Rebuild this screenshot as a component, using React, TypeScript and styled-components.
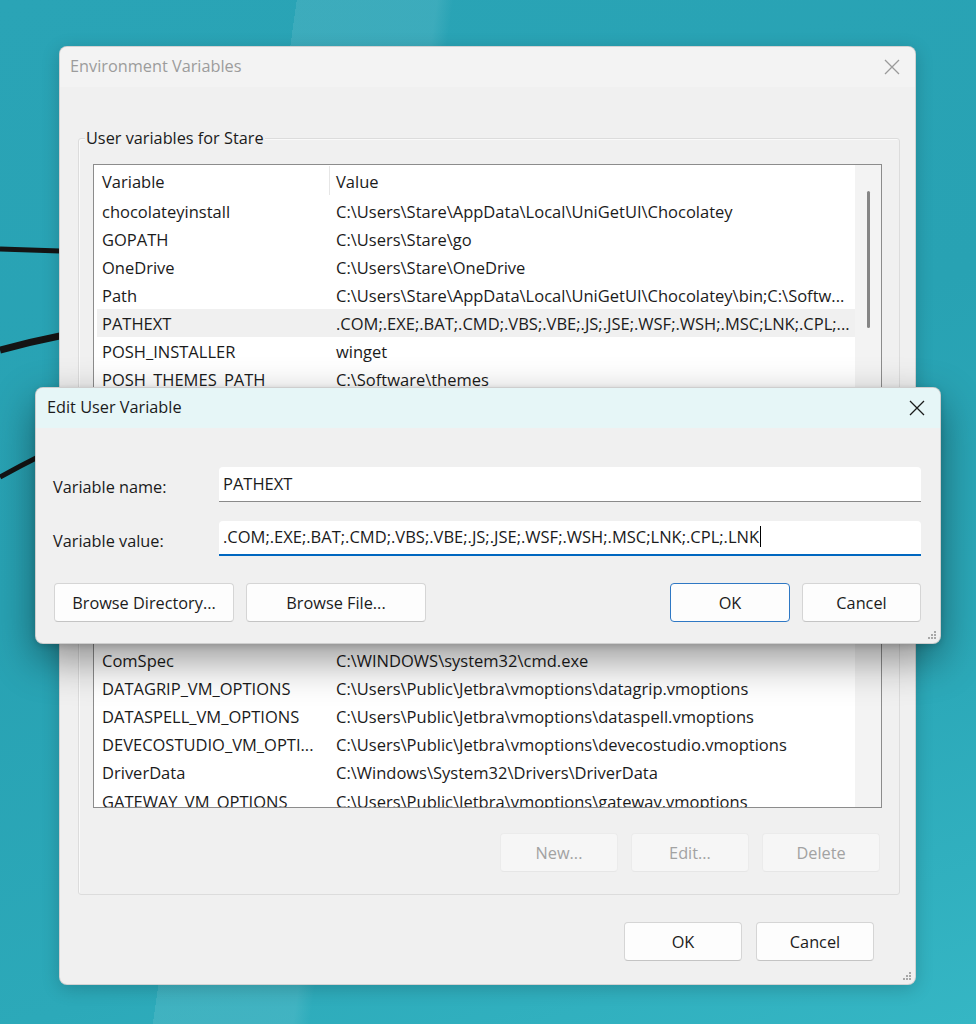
import styled, { createGlobalStyle } from 'styled-components'

const GlobalStyle = createGlobalStyle`
  html, body {
    margin: 0;
    padding: 0;
  }
  body {
    font-family: 'Open Sans', 'Noto Sans', sans-serif;
    color: #1b1b1b;
  }
`

const FONT = '16.3px'
const LIST_FONT = '16.5px'

type Row = { name: string; value: string; selected?: boolean }

const rows: Row[] = [
  { name: 'chocolateyinstall', value: 'C:\\Users\\Stare\\AppData\\Local\\UniGetUI\\Chocolatey' },
  { name: 'GOPATH', value: 'C:\\Users\\Stare\\go' },
  { name: 'OneDrive', value: 'C:\\Users\\Stare\\OneDrive' },
  { name: 'Path', value: 'C:\\Users\\Stare\\AppData\\Local\\UniGetUI\\Chocolatey\\bin;C:\\Softw...' },
  { name: 'PATHEXT', value: '.COM;.EXE;.BAT;.CMD;.VBS;.VBE;.JS;.JSE;.WSF;.WSH;.MSC;LNK;.CPL;...', selected: true },
  { name: 'POSH_INSTALLER', value: 'winget' },
  { name: 'POSH_THEMES_PATH', value: 'C:\\Software\\themes' },
  { name: 'TEMP', value: 'C:\\Users\\Stare\\AppData\\Local\\Temp' },
  { name: 'TMP', value: 'C:\\Users\\Stare\\AppData\\Local\\Temp' },
  { name: 'ALLUSERSPROFILE', value: 'C:\\ProgramData' },
  { name: 'APPCODE_VM_OPTIONS', value: 'C:\\Users\\Public\\Jetbra\\vmoptions\\appcode.vmoptions' },
  { name: 'CLION_VM_OPTIONS', value: 'C:\\Users\\Public\\Jetbra\\vmoptions\\clion.vmoptions' },
  { name: 'CommonProgramFiles', value: 'C:\\Program Files\\Common Files' },
  { name: 'CommonProgramFiles(x86)', value: 'C:\\Program Files (x86)\\Common Files' },
  { name: 'CommonProgramW6432', value: 'C:\\Program Files\\Common Files' },
  { name: 'COMPUTERNAME', value: 'STARE-PC' },
  { name: 'ComSpec', value: 'C:\\WINDOWS\\system32\\cmd.exe' },
  { name: 'DATAGRIP_VM_OPTIONS', value: 'C:\\Users\\Public\\Jetbra\\vmoptions\\datagrip.vmoptions' },
  { name: 'DATASPELL_VM_OPTIONS', value: 'C:\\Users\\Public\\Jetbra\\vmoptions\\dataspell.vmoptions' },
  { name: 'DEVECOSTUDIO_VM_OPTI...', value: 'C:\\Users\\Public\\Jetbra\\vmoptions\\devecostudio.vmoptions' },
  { name: 'DriverData', value: 'C:\\Windows\\System32\\Drivers\\DriverData' },
  { name: 'GATEWAY_VM_OPTIONS', value: 'C:\\Users\\Public\\Jetbra\\vmoptions\\gateway.vmoptions' },
]

const CloseIcon = ({ color }: { color: string }) => (
  <svg width="16" height="16" viewBox="0 0 16 16">
    <path d="M1 1 L15 15 M15 1 L1 15" stroke={color} strokeWidth="1.3" fill="none" />
  </svg>
)

const Grip = () => (
  <svg width="10" height="10" viewBox="0 0 10 10">
    {[
      [8, 2],
      [5, 5],
      [8, 5],
      [2, 8],
      [5, 8],
      [8, 8],
    ].map(([x, y], i) => (
      <rect key={i} x={x - 1} y={y - 1} width="2" height="2" fill="#a8a8a8" />
    ))}
  </svg>
)

const App = () => {
  return (
    <>
      <GlobalStyle />
      <Desktop>
        <Cables width="60" height="520" viewBox="0 0 60 520">
          <path d="M0 249 L60 251" stroke="#141414" strokeWidth="5" fill="none" />
          <path d="M0 350 Q30 342 60 336" stroke="#141414" strokeWidth="7" fill="none" />
          <path d="M0 477 Q20 466 40 456" stroke="#141414" strokeWidth="5" fill="none" />
        </Cables>

        <MainWindow>
          <TitleBar>
            <WindowTitle $inactive>Environment Variables</WindowTitle>
            <CloseButton>
              <CloseIcon color="#9a9a9a" />
            </CloseButton>
          </TitleBar>
          <MainBody>
            <GroupBox>
              <Legend>User variables for Stare</Legend>
              <ListView>
                <ListRows>
                  <HeaderRow>
                    <NameCell>Variable</NameCell>
                    <HeaderDivider />
                    <ValueCell>Value</ValueCell>
                  </HeaderRow>
                  {rows.map((r) => (
                    <ListRow key={r.name} $selected={r.selected}>
                      <NameCell>{r.name}</NameCell>
                      <ValueCell>{r.value}</ValueCell>
                    </ListRow>
                  ))}
                </ListRows>
                <ScrollTrack>
                  <ScrollThumb />
                </ScrollTrack>
              </ListView>
              <ButtonRow>
                <Button $disabled>New...</Button>
                <Button $disabled>Edit...</Button>
                <Button $disabled>Delete</Button>
              </ButtonRow>
            </GroupBox>
            <FooterRow>
              <Button>OK</Button>
              <Button>Cancel</Button>
            </FooterRow>
          </MainBody>
          <GripSpot>
            <Grip />
          </GripSpot>
        </MainWindow>

        <EditDialog>
          <DialogTitleBar>
            <WindowTitle>Edit User Variable</WindowTitle>
            <CloseButton>
              <CloseIcon color="#1b1b1b" />
            </CloseButton>
          </DialogTitleBar>
          <DialogBody>
            <FieldGrid>
              <FieldLabel>Variable name:</FieldLabel>
              <TextField>PATHEXT</TextField>
              <FieldLabel>Variable value:</FieldLabel>
              <TextField $focused>
                .COM;.EXE;.BAT;.CMD;.VBS;.VBE;.JS;.JSE;.WSF;.WSH;.MSC;LNK;.CPL;.LNK
                <Caret />
              </TextField>
            </FieldGrid>
            <DialogButtons>
              <Button $width={180}>Browse Directory...</Button>
              <Button $width={180}>Browse File...</Button>
              <Spacer />
              <Button $width={120} $default>
                OK
              </Button>
              <Button $width={119}>Cancel</Button>
            </DialogButtons>
          </DialogBody>
          <GripSpot>
            <Grip />
          </GripSpot>
        </EditDialog>
      </Desktop>
    </>
  )
}

export default App

const Desktop = styled.div`
  position: relative;
  width: 976px;
  height: 1024px;
  overflow: hidden;
  background:
    linear-gradient(98deg, transparent 26.5%, rgba(255, 255, 255, 0.09) 26.5%, rgba(255, 255, 255, 0.09) 39%, transparent 40.5%),
    linear-gradient(160deg, #2aa4b6 0%, #28a2b3 45%, #2ca9b9 75%, #35b6c4 100%);
`

const Cables = styled.svg`
  position: absolute;
  left: 0;
  top: 0;
`

const MainWindow = styled.div`
  position: absolute;
  left: 59px;
  top: 46px;
  width: 857px;
  height: 939px;
  box-sizing: border-box;
  background: #f0f0f0;
  border: 1px solid rgba(0, 0, 0, 0.12);
  border-radius: 8px;
  box-shadow: 0 4px 18px rgba(0, 0, 0, 0.18);
  display: flex;
  flex-direction: column;
  overflow: hidden;
`

const TitleBar = styled.div`
  height: 40px;
  flex-shrink: 0;
  display: flex;
  align-items: center;
  justify-content: space-between;
  padding-left: 10px;
  background: #f3f3f3;
`

const WindowTitle = styled.div<{ $inactive?: boolean }>`
  font-size: ${FONT};
  margin-top: -2px;
  color: ${(p) => (p.$inactive ? '#9c9c9c' : '#1b1b1b')};
`

const CloseButton = styled.div`
  width: 46px;
  height: 100%;
  display: flex;
  align-items: center;
  justify-content: center;
`

const MainBody = styled.div`
  flex: 1;
  display: flex;
  flex-direction: column;
  padding: 51px 15px 0 18px;
`

const GroupBox = styled.div`
  display: flex;
  flex-direction: column;
  border: 1px solid #dcdcdc;
  border-radius: 3px;
  box-shadow: inset 1px 1px 0 #fafafa;
  padding: 0 17px 22px 14px;
`

const Legend = styled.div`
  align-self: flex-start;
  margin: -13px 0 0 -8px;
  height: 24px;
  line-height: 24px;
  padding: 0 1px;
  background: #f0f0f0;
  font-size: ${FONT};
`

const ListView = styled.div`
  margin-top: 14px;
  height: 644px;
  box-sizing: border-box;
  border: 1px solid #8c8c8c;
  background: #fff;
  display: flex;
`

const ListRows = styled.div`
  flex: 1;
  overflow: hidden;
  padding-left: 3px;
  min-width: 0;
`

const HeaderRow = styled.div`
  position: relative;
  height: 32px;
  display: flex;
  align-items: center;
  font-size: ${LIST_FONT};
`

const HeaderDivider = styled.div`
  position: absolute;
  left: 232px;
  top: 1px;
  bottom: 2px;
  width: 1px;
  background: #e6e6e6;
`

const ListRow = styled.div<{ $selected?: boolean }>`
  height: 28.1px;
  display: flex;
  align-items: center;
  font-size: ${LIST_FONT};
  background: ${(p) => (p.$selected ? '#f0f0f0' : 'transparent')};
`

const NameCell = styled.div`
  width: 232px;
  flex-shrink: 0;
  box-sizing: border-box;
  padding-left: 5px;
  white-space: nowrap;
  overflow: hidden;
`

const ValueCell = styled.div`
  flex: 1;
  min-width: 0;
  padding-left: 7px;
  white-space: nowrap;
  overflow: hidden;
`

const ScrollTrack = styled.div`
  width: 26px;
  flex-shrink: 0;
  background: #f3f3f3;
  display: flex;
  justify-content: center;
  padding-top: 26px;
  box-sizing: border-box;
`

const ScrollThumb = styled.div`
  width: 3px;
  height: 137px;
  margin-left: 1px;
  border-radius: 2px;
  background: #858585;
`

const ButtonRow = styled.div`
  margin-top: 25px;
  padding-right: 2px;
  display: flex;
  justify-content: flex-end;
  gap: 13px;
`

const FooterRow = styled.div`
  margin-top: 27px;
  padding-right: 26px;
  display: flex;
  justify-content: flex-end;
  gap: 14px;
`

const Button = styled.div<{ $disabled?: boolean; $default?: boolean; $width?: number }>`
  width: ${(p) => p.$width ?? 118}px;
  height: 39px;
  box-sizing: border-box;
  display: flex;
  align-items: center;
  justify-content: center;
  font-size: ${FONT};
  border-radius: 4px;
  white-space: nowrap;
  color: ${(p) => (p.$disabled ? '#a2a2a2' : '#1b1b1b')};
  background: ${(p) => (p.$disabled ? '#f6f6f6' : '#fdfdfd')};
  border: 1px solid ${(p) => (p.$disabled ? '#ebebeb' : p.$default ? '#2f78c4' : '#d5d5d5')};
  border-bottom-color: ${(p) => (p.$disabled ? '#e6e6e6' : p.$default ? '#2f78c4' : '#c4c4c4')};
`

const GripSpot = styled.div`
  position: absolute;
  right: 3px;
  bottom: 3px;
  display: flex;
`

const EditDialog = styled.div`
  position: absolute;
  left: 35px;
  top: 387px;
  width: 906px;
  height: 257px;
  box-sizing: border-box;
  background: #f0f0f0;
  border: 1px solid rgba(0, 0, 0, 0.14);
  border-radius: 8px;
  box-shadow: 0 16px 42px rgba(0, 0, 0, 0.42), 0 2px 6px rgba(0, 0, 0, 0.14);
  display: flex;
  flex-direction: column;
  overflow: hidden;
`

const DialogTitleBar = styled(TitleBar)`
  height: 40px;
  padding-left: 11px;
  background: #e6f6f7;
`

const DialogBody = styled.div`
  flex: 1;
  display: flex;
  flex-direction: column;
  padding: 39px 19px 0 17px;
`

const FieldGrid = styled.div`
  display: grid;
  grid-template-columns: 166px 1fr;
  row-gap: 19px;
  align-items: center;
`

const FieldLabel = styled.div`
  font-size: ${FONT};
  padding-top: 4px;
`

const TextField = styled.div<{ $focused?: boolean }>`
  height: 35px;
  box-sizing: border-box;
  display: flex;
  align-items: center;
  padding: 0 4px 2px;
  font-size: ${LIST_FONT};
  background: #fff;
  border-radius: 4px 4px 0 0;
  border-bottom: ${(p) => (p.$focused ? '2px solid #0067c0' : '1px solid #8a8a8a')};
  white-space: nowrap;
`

const Caret = styled.span`
  display: inline-block;
  width: 1px;
  height: 21px;
  background: #000;
  margin-left: 1px;
`

const DialogButtons = styled.div`
  margin-top: 27px;
  display: flex;
  gap: 12px;
  padding-left: 1px;
`

const Spacer = styled.div`
  flex: 1;
`
